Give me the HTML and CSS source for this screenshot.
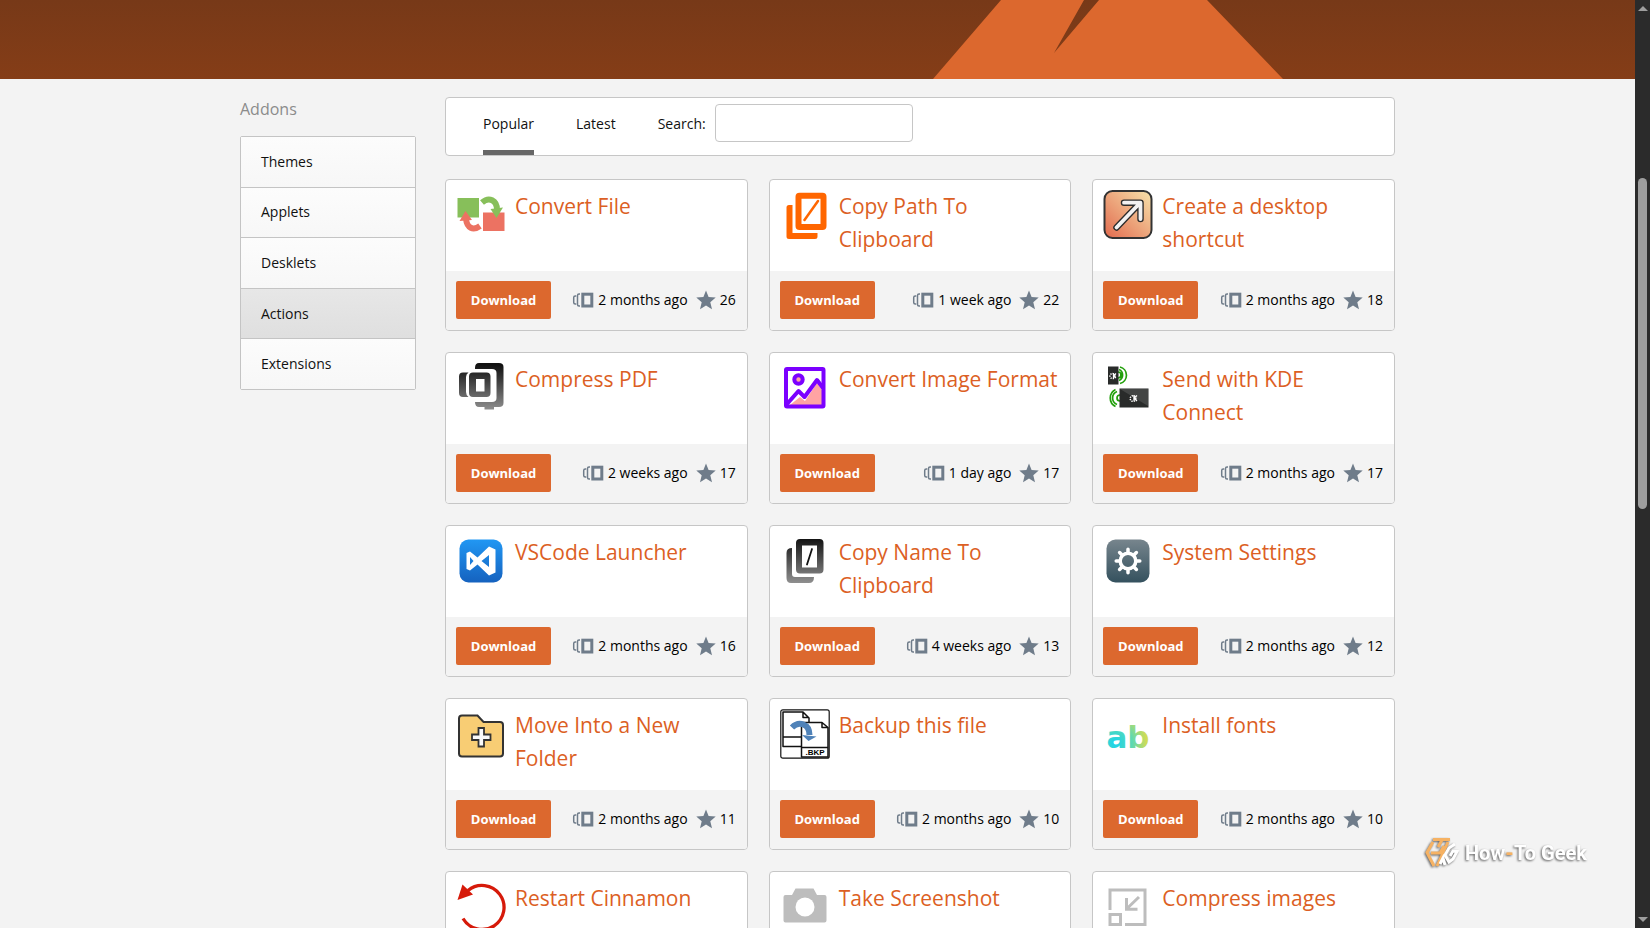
FILE: index.html
```
<!DOCTYPE html>
<html lang="en">
<head>
    <meta charset="UTF-8">
    <meta name="viewport" content="width=device-width, initial-scale=1.0">
    <title>Actions - Addons</title>
    <link rel="stylesheet" href="styles.css">
</head>
<body>

<!-- Shared icons and gradients -->
<svg class="defs" aria-hidden="true">
    <symbol id="i-age" viewBox="0 0 22 16">
        <path d="M4.2 4H3.2Q1.7 4 1.7 5.5V10.5Q1.7 12 3.2 12H4.2M8 2H7Q5.5 2 5.5 3.5V12.5Q5.5 14 7 14H8" fill="none" stroke="#6f7c8a" stroke-width="1.5"/>
        <rect x="10.8" y="2.2" width="9" height="11.8" fill="none" stroke="#6f7c8a" stroke-width="3"/>
    </symbol>
    <symbol id="i-star" viewBox="0 0 20 20">
        <path d="M10 0.500l2.600 6.600 7.100.5-5.400 4.600 1.700 7L10 15.400 4 19.200l1.700-7L.3 7.600l7.100-.5z" fill="#6f7c8a"/>
    </symbol>
    <linearGradient id="g-dark" gradientUnits="userSpaceOnUse" x1="0" y1="2" x2="0" y2="47">
        <stop offset="0" stop-color="#111"/><stop offset="1" stop-color="#8f8f8f"/>
    </linearGradient>
    <linearGradient id="g-sun" x1="0" y1="1" x2="1" y2="0">
        <stop offset="0" stop-color="#e26a4e"/><stop offset="1" stop-color="#f7e3ab"/>
    </linearGradient>
    <linearGradient id="g-blue" x1="0" y1="0" x2="0" y2="1">
        <stop offset="0" stop-color="#2197f3"/><stop offset="1" stop-color="#1562bf"/>
    </linearGradient>
    <linearGradient id="g-slate" x1="0" y1="0" x2="0" y2="1">
        <stop offset="0" stop-color="#77858d"/><stop offset="1" stop-color="#34515e"/>
    </linearGradient>
    <radialGradient id="g-ab" gradientUnits="userSpaceOnUse" cx="12" cy="34" r="32">
        <stop offset="0" stop-color="#17d3ee"/><stop offset=".55" stop-color="#5fd9b0"/><stop offset="1" stop-color="#d3dc52"/>
    </radialGradient>
</svg>

<div class="page">
    <header class="hero">
        <svg class="peak" viewBox="0 0 350 79" aria-hidden="true">
            <path d="M0 79L68 0H151L121 53 166 0H274L350 79z" fill="#dc682e"/>
        </svg>
    </header>

    <div class="container">
        <aside class="sidebar">
            <h2>Addons</h2>
            <nav class="side-menu">
                <a href="#">Themes</a>
                <a href="#">Applets</a>
                <a href="#">Desklets</a>
                <a href="#" class="active">Actions</a>
                <a href="#">Extensions</a>
            </nav>
        </aside>

        <main>
            <div class="toolbar">
                <a href="#" class="tab active">Popular</a>
                <a href="#" class="tab">Latest</a>
                <div class="search">
                    <label for="search">Search:</label>
                    <input type="text" id="search">
                </div>
            </div>

            <div class="cards">
                <article class="card">
                    <div class="card-top">
                        <svg class="icon" viewBox="0 0 50 50">
                            <path d="M1.500 8H23V27.500H1.500z" fill="#87bf5a"/>
                            <path d="M27 22.500H48.500V41H27z" fill="#ec7262"/>
                            <path d="M26 12.500C33 6.500 41 10 41 20" fill="none" stroke="#87bf5a" stroke-width="6"/>
                            <path d="M34.500 19L47 17.500 40.500 28z" fill="#87bf5a"/>
                            <path d="M10 29C11 38 17 41 24 36" fill="none" stroke="#ec7262" stroke-width="6"/>
                            <path d="M3.500 31L9.500 21 16 30z" fill="#ec7262"/>
                        </svg>
                        <h3><a href="#">Convert File</a></h3>
                    </div>
                    <div class="card-bottom">
                        <button type="button">Download</button>
                        <span class="age"><svg><use href="#i-age"/></svg>2 months ago</span>
                        <span class="score"><svg><use href="#i-star"/></svg>26</span>
                    </div>
                </article>

                <article class="card">
                    <div class="card-top">
                        <svg class="icon" viewBox="0 0 50 50">
                            <rect x="18.500" y="5.700" width="25" height="31.300" rx="1" fill="none" stroke="#f60" stroke-width="6" stroke-linejoin="round"/>
                            <path d="M6.500 17.500Q6.500 15 9 15H12.500V43H37.500V46.500Q37.500 49 35 49H9Q6.500 49 6.500 46.500z" fill="#f60"/>
                            <path d="M24.500 30L38 11" stroke="#f60" stroke-width="2.500" stroke-linecap="round"/>
                        </svg>
                        <h3><a href="#">Copy Path To Clipboard</a></h3>
                    </div>
                    <div class="card-bottom">
                        <button type="button">Download</button>
                        <span class="age"><svg><use href="#i-age"/></svg>1 week ago</span>
                        <span class="score"><svg><use href="#i-star"/></svg>22</span>
                    </div>
                </article>

                <article class="card">
                    <div class="card-top">
                        <svg class="icon" viewBox="0 0 50 50">
                            <rect x="1.500" y="1" width="47" height="47" rx="8" fill="url(#g-sun)" stroke="#333" stroke-width="2"/>
                            <g fill="none" stroke-linecap="round" stroke-linejoin="round">
                                <path d="M13.500 37.500L36 14M21 12.700H37.500V29" stroke="#2d2d2d" stroke-width="6.500"/>
                                <path d="M13.500 37.500L36 14M21 12.700H37.500V29" stroke="#f2f2f2" stroke-width="3.800"/>
                            </g>
                        </svg>
                        <h3><a href="#">Create a desktop shortcut</a></h3>
                    </div>
                    <div class="card-bottom">
                        <button type="button">Download</button>
                        <span class="age"><svg><use href="#i-age"/></svg>2 months ago</span>
                        <span class="score"><svg><use href="#i-star"/></svg>18</span>
                    </div>
                </article>

                <article class="card">
                    <div class="card-top">
                        <svg class="icon" viewBox="0 0 50 50">
                            <g fill="url(#g-dark)">
                                <path d="M19 5Q19 0 23 0H43Q47.500 0 47.500 4V40Q47.500 44 43 44H38V46.500H28.500V44H23Q19 44 19 39H36Q40.500 39 40.500 35V10Q40.500 6 36 6H19z"/>
                                <path d="M17 9.500H30.500Q34.500 9.500 34.500 13.500V30Q34.500 34 30.500 34H17Q13 34 13 30V13.500Q13 9.500 17 9.500zM20 16V28.500H28.500V16z" fill-rule="evenodd"/>
                                <path d="M12.500 9.500H7Q3 9.500 3 13.500V30Q3 34 7 34H12.500Q10 32 10 29V14Q10 11 12.500 9.500z"/>
                            </g>
                        </svg>
                        <h3><a href="#">Compress PDF</a></h3>
                    </div>
                    <div class="card-bottom">
                        <button type="button">Download</button>
                        <span class="age"><svg><use href="#i-age"/></svg>2 weeks ago</span>
                        <span class="score"><svg><use href="#i-star"/></svg>17</span>
                    </div>
                </article>

                <article class="card">
                    <div class="card-top">
                        <svg class="icon" viewBox="0 0 50 50">
                            <path d="M10 42L20 34 25 38 37 20 42 27V42z" fill="#ffa3a3"/>
                            <g stroke="#7b00ff" stroke-width="4" stroke-linejoin="round">
                                <rect x="6" y="6" width="37.500" height="37.500" rx="1" fill="none"/>
                                <circle cx="18.500" cy="16.500" r="4.200" fill="#ffa3a3"/>
                                <path d="M7 41L18.500 28 24.500 34 37 17 43 25" fill="none"/>
                            </g>
                        </svg>
                        <h3><a href="#">Convert Image Format</a></h3>
                    </div>
                    <div class="card-bottom">
                        <button type="button">Download</button>
                        <span class="age"><svg><use href="#i-age"/></svg>1 day ago</span>
                        <span class="score"><svg><use href="#i-star"/></svg>17</span>
                    </div>
                </article>

                <article class="card">
                    <div class="card-top">
                        <svg class="icon" viewBox="0 0 50 50">
                            <g fill="none" stroke="#23a00c" stroke-width="1.700">
                                <path d="M15 9A3 3 0 0 1 15 15M16 6.500A6 6 0 0 1 16 17.500M17 4A8.500 8.500 0 0 1 17 20.500"/>
                                <path d="M17 32A3 3 0 0 0 17 38M14 28.500A7 7 0 0 0 14 41.500M12.500 26.500A9.500 9.500 0 0 0 12.500 43.500"/>
                            </g>
                            <path d="M5 3.500H15.500V21.500H5zM16.500 25.500H45.500V44.500H16.500z" fill="#292b2a"/>
                            <path d="M17 26H45V43z" fill="#434544"/>
                            <g fill="none" stroke="#fff">
                                <circle cx="9.500" cy="13" r="2.500" stroke-width="1.500" stroke-dasharray="1.300 1"/>
                                <path d="M10.500 10V15M13 10.500L10.500 13 13 15" stroke-width="1.200"/>
                                <circle cx="30" cy="35.500" r="2.800" stroke-width="1.500" stroke-dasharray="1.300 1"/>
                                <path d="M31 32V37.500M34 32.500L31 35 34 38" stroke-width="1.300"/>
                            </g>
                        </svg>
                        <h3><a href="#">Send with KDE Connect</a></h3>
                    </div>
                    <div class="card-bottom">
                        <button type="button">Download</button>
                        <span class="age"><svg><use href="#i-age"/></svg>2 months ago</span>
                        <span class="score"><svg><use href="#i-star"/></svg>17</span>
                    </div>
                </article>

                <article class="card">
                    <div class="card-top">
                        <svg class="icon" viewBox="0 0 50 50">
                            <rect x="3.500" y="3.500" width="43" height="43" rx="9" fill="url(#g-blue)"/>
                            <path d="M33 10.500L39.500 13.500V36.500L33 39.500 21.500 28.500 14 34.500 10.500 33V17L14 15.500 21.500 21.500zM33 19L25.500 25 33 31zM14 21V29L17.500 25z" fill="#fff" fill-rule="evenodd"/>
                        </svg>
                        <h3><a href="#">VSCode Launcher</a></h3>
                    </div>
                    <div class="card-bottom">
                        <button type="button">Download</button>
                        <span class="age"><svg><use href="#i-age"/></svg>2 months ago</span>
                        <span class="score"><svg><use href="#i-star"/></svg>16</span>
                    </div>
                </article>

                <article class="card">
                    <div class="card-top">
                        <svg class="icon" viewBox="0 0 50 50">
                            <g fill="url(#g-dark)">
                                <path d="M20 3H39.500Q43.500 3 43.500 7V33.500Q43.500 37.500 39.500 37.500H20Q16 37.500 16 33.500V7Q16 3 20 3zM22 9.500V31.500H37V9.500z" fill-rule="evenodd"/>
                                <path d="M12 12Q6.500 12 6.500 17V42Q6.500 47 11 47H29Q34 47 34 41H15Q12 41 12 38z"/>
                            </g>
                            <path d="M27 28.500L32 13" stroke="#111" stroke-width="1.800" stroke-linecap="round"/>
                        </svg>
                        <h3><a href="#">Copy Name To Clipboard</a></h3>
                    </div>
                    <div class="card-bottom">
                        <button type="button">Download</button>
                        <span class="age"><svg><use href="#i-age"/></svg>4 weeks ago</span>
                        <span class="score"><svg><use href="#i-star"/></svg>13</span>
                    </div>
                </article>

                <article class="card">
                    <div class="card-top">
                        <svg class="icon" viewBox="0 0 50 50">
                            <rect x="3.500" y="3.500" width="43" height="43" rx="9" fill="url(#g-slate)"/>
                            <g fill="none" stroke="#fff" stroke-width="3.500" stroke-linecap="round">
                                <circle cx="25" cy="25" r="7.800"/>
                                <path d="M25 16V13.200M25 34V36.800M16 25H13.200M34 25H36.800M18.600 18.600L16.600 16.600M31.400 31.400L33.400 33.400M18.600 31.400L16.600 33.400M31.400 18.600L33.400 16.600"/>
                            </g>
                        </svg>
                        <h3><a href="#">System Settings</a></h3>
                    </div>
                    <div class="card-bottom">
                        <button type="button">Download</button>
                        <span class="age"><svg><use href="#i-age"/></svg>2 months ago</span>
                        <span class="score"><svg><use href="#i-star"/></svg>12</span>
                    </div>
                </article>

                <article class="card">
                    <div class="card-top">
                        <svg class="icon" viewBox="0 0 50 50">
                            <path d="M6 6.500H21.500L27.500 13H44Q47 13 47 16V44.500Q47 47.500 44 47.500H6Q3 47.500 3 44.500V9.500Q3 6.500 6 6.500z" fill="#f8cd74" stroke="#333" stroke-width="2"/>
                            <path d="M22.500 19H28V25.500H34.500V31H28V37.500H22.500V31H16V25.500H22.500z" fill="#fafafa" stroke="#333" stroke-width="1.800"/>
                        </svg>
                        <h3><a href="#">Move Into a New Folder</a></h3>
                    </div>
                    <div class="card-bottom">
                        <button type="button">Download</button>
                        <span class="age"><svg><use href="#i-age"/></svg>2 months ago</span>
                        <span class="score"><svg><use href="#i-star"/></svg>11</span>
                    </div>
                </article>

                <article class="card">
                    <div class="card-top">
                        <svg class="icon" viewBox="0 0 50 50">
                            <g fill="#fff" stroke="#111" stroke-width="1.500" stroke-linejoin="round">
                                <rect x=".8" y=".8" width="48.400" height="48.400" rx="2" stroke-width="1.200"/>
                                <path d="M3 3H23L29 9V37.500H3zM23 3V8.500H29M3 28H22"/>
                                <path d="M21.500 13.500H42L48 18.500V48H21.500zM42 13.500V18.500H48M21.500 38.500H48"/>
                            </g>
                            <path d="M12 18.500C19 11.500 29.500 15 29.500 26" fill="none" stroke="#4f82b8" stroke-width="6"/>
                            <path d="M22 26L36.500 27.500 28.500 32z" fill="#4f82b8"/>
                            <text class="bkp" x="35" y="46" text-anchor="middle">.BKP</text>
                        </svg>
                        <h3><a href="#">Backup this file</a></h3>
                    </div>
                    <div class="card-bottom">
                        <button type="button">Download</button>
                        <span class="age"><svg><use href="#i-age"/></svg>2 months ago</span>
                        <span class="score"><svg><use href="#i-star"/></svg>10</span>
                    </div>
                </article>

                <article class="card">
                    <div class="card-top">
                        <svg class="icon" viewBox="0 0 50 50">
                            <text class="ab" x="25" y="39" text-anchor="middle" fill="url(#g-ab)">ab</text>
                        </svg>
                        <h3><a href="#">Install fonts</a></h3>
                    </div>
                    <div class="card-bottom">
                        <button type="button">Download</button>
                        <span class="age"><svg><use href="#i-age"/></svg>2 months ago</span>
                        <span class="score"><svg><use href="#i-star"/></svg>10</span>
                    </div>
                </article>

                <article class="card">
                    <div class="card-top">
                        <svg class="icon" viewBox="0 0 50 50">
                            <path d="M7 36.500A22 22 0 1 0 12 8.500" fill="none" stroke="#d61a0a" stroke-width="3.300"/>
                            <path d="M6.500 2.500L1.500 18 17 12.500z" fill="#d61a0a"/>
                        </svg>
                        <h3><a href="#">Restart Cinnamon</a></h3>
                    </div>
                </article>

                <article class="card">
                    <div class="card-top">
                        <svg class="icon" viewBox="0 0 50 50">
                            <path d="M15.500 6.500H33.500L37 13H44.500Q46.500 13 46.500 15V38.500Q46.500 40.500 44.500 40.500H5.500Q3.500 40.500 3.500 38.500V15Q3.500 13 5.500 13H12z" fill="#bdbdbd"/>
                            <circle cx="25" cy="25" r="9.500" fill="#fff"/>
                        </svg>
                        <h3><a href="#">Take Screenshot</a></h3>
                    </div>
                </article>

                <article class="card">
                    <div class="card-top">
                        <svg class="icon" viewBox="0 0 50 50">
                            <path d="M7 28V8H42V42.500H22M7 32.500H17.500V42.500H7zM36 15L23.500 27M23.500 16V27.200H34.500" fill="none" stroke="#bdbdbd" stroke-width="3"/>
                        </svg>
                        <h3><a href="#">Compress images</a></h3>
                    </div>
                </article>
            </div>
        </main>
    </div>
</div>

<div class="scrollbar">
    <span class="arrow up"></span>
    <div class="track"><div class="thumb"></div></div>
    <span class="arrow down"></span>
</div>

<div class="watermark">
    <svg viewBox="0 0 36 32">
        <g fill="none" stroke-width="3">
            <path d="M9 2.500H26M18 3L14 10M9 5L3 15.500 10 29M7 16H16L20 9M24 5L13 29" stroke="#f6b263"/>
            <path d="M31 7L25 11 21 18 25 25 29 22 33 14.500 29 14 26 19M16 27L19 21 21 28" stroke="#fff"/>
        </g>
    </svg>
    <span>How<b>-</b>To Geek</span>
</div>

</body>
</html>
```
FILE: styles.css
```
* {
    margin: 0;
    padding: 0;
    box-sizing: border-box;
}

body {
    display: flex;
    height: 100vh;
    overflow: hidden;
    font-family: "Open Sans", sans-serif;
    font-size: 14px;
    line-height: 24px;
    color: #111;
    background-color: #f3f3f3;
}

a {
    color: inherit;
    text-decoration: none;
}

.defs {
    position: absolute;
    width: 0;
    height: 0;
}

.page {
    flex: 1;
    overflow: hidden;
}

/* Hero */
.hero {
    height: 79px;
    padding-left: calc(50% + 115px);
    background: linear-gradient(#773918, #853d17);
}

.peak {
    display: block;
    width: 350px;
    height: 79px;
}

.container {
    display: grid;
    grid-template-columns: 176px 1fr;
    gap: 29px;
    max-width: 1155px;
    margin: 0 auto;
    padding-top: 18px;
}

/* Sidebar */
.sidebar h2 {
    margin-bottom: 15px;
    font-size: 16px;
    font-weight: 400;
    line-height: 24px;
    color: #8b8b8b;
}

.side-menu {
    display: flex;
    flex-direction: column;
    height: 254px;
    border: 1px solid #c4c4c4;
    border-radius: 2px;
}

.side-menu a {
    display: flex;
    flex: 1;
    align-items: center;
    padding: 0 20px;
    background: linear-gradient(#fcfcfc, #f7f7f7);
}

.side-menu a + a {
    border-top: 1px solid #c4c4c4;
}

.side-menu .active {
    background: linear-gradient(#e7e7e7, #dfdfdf);
}

/* Tabs and search */
.toolbar {
    display: flex;
    gap: 42px;
    height: 59px;
    margin-bottom: 23px;
    padding-left: 37px;
    background-color: #fff;
    border: 1px solid #c6c6c6;
    border-radius: 4px;
}

.tab {
    padding-top: 14px;
}

.tab.active {
    border-bottom: 5px solid #666;
}

.search {
    display: flex;
    gap: 9px;
    padding-top: 6px;
}

.search label {
    padding-top: 8px;
}

.search input {
    width: 198px;
    height: 38px;
    padding: 0 10px;
    font: inherit;
    background-color: #fff;
    border: 1px solid #c6c6c6;
    border-radius: 4px;
}

/* Cards */
.cards {
    display: grid;
    grid-template-columns: repeat(3, 1fr);
    gap: 21px;
}

.card {
    overflow: hidden;
    background-color: #fff;
    border: 1px solid #c6c6c6;
    border-radius: 4px;
}

.card-top {
    display: flex;
    gap: 9px;
    height: 91px;
    padding: 10px;
}

.icon {
    flex: none;
    width: 50px;
    height: 50px;
}

.bkp {
    font: bold 8px "Liberation Sans", sans-serif;
}

.ab {
    font: bold 31px "DejaVu Sans", sans-serif;
}

.card h3 {
    font-size: 21px;
    font-weight: 400;
    line-height: 33px;
    color: #dc5f24;
}

.card-bottom {
    display: flex;
    align-items: center;
    gap: 8px;
    height: 59px;
    padding: 0 11px 1px 10px;
    color: #000;
    background-color: #f3f3f3;
}

.card-bottom button {
    width: 95px;
    height: 38px;
    margin-right: auto;
    font: bold 13px "Open Sans", sans-serif;
    color: #fff;
    background-color: #dc682e;
    border: none;
    border-radius: 2px;
    cursor: pointer;
}

.age,
.score {
    display: flex;
    align-items: center;
    gap: 4px;
}

.age svg {
    width: 22px;
    height: 16px;
}

.score svg {
    width: 20px;
    height: 20px;
}

/* Scrollbar */
.scrollbar {
    display: flex;
    flex-direction: column;
    align-items: center;
    width: 15px;
    padding: 6px 0;
    background-color: #2b2b2b;
}

.arrow {
    border: 5px solid transparent;
}

.arrow.up {
    border-top: none;
    border-bottom-color: #9e9e9e;
}

.arrow.down {
    border-bottom: none;
    border-top-color: #9e9e9e;
}

.track {
    flex: 1;
    padding-top: 167px;
}

.thumb {
    width: 9px;
    height: 331px;
    background-color: #9e9e9e;
    border-radius: 5px;
}

/* Site mark over the page */
.watermark {
    position: fixed;
    right: 63px;
    bottom: 59px;
    display: flex;
    align-items: center;
    gap: 5px;
    font: bold 20px "Roboto", sans-serif;
    color: #fff;
    filter: drop-shadow(-1px 1px 1px rgba(0, 0, 0, 0.6));
}

.watermark svg {
    width: 36px;
    height: 32px;
}

.watermark b {
    color: #f6b263;
}
```
